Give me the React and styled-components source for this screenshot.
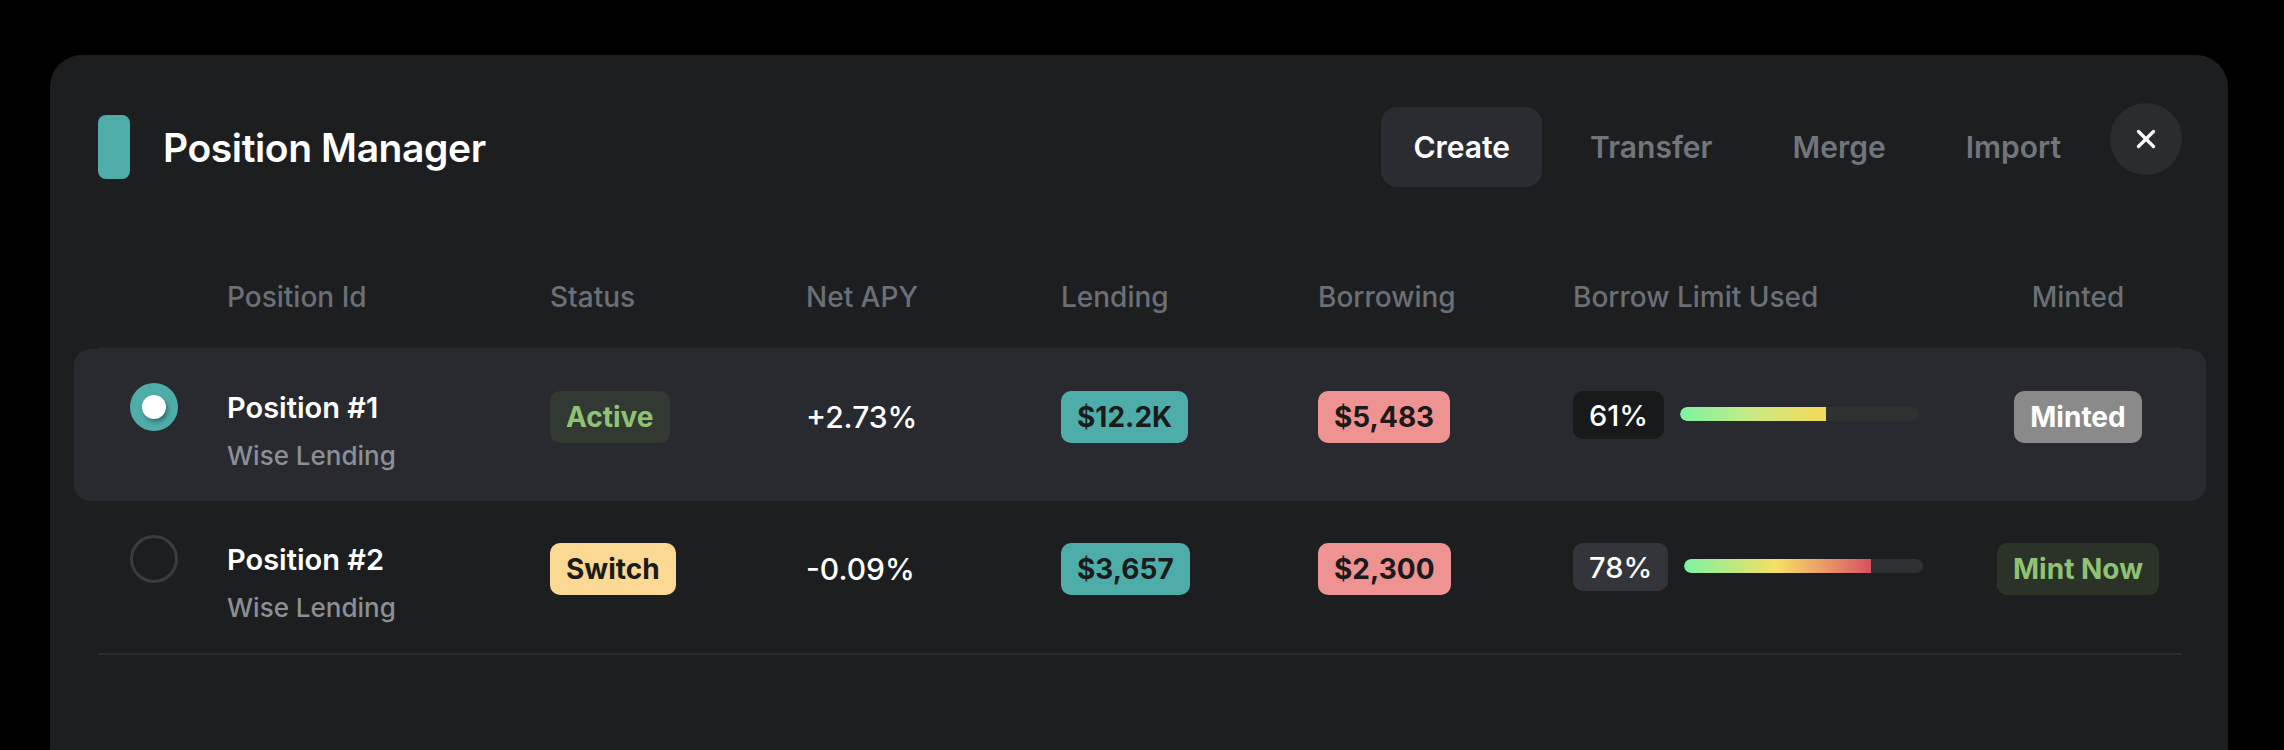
import React, { useState } from 'react'
import styled, { createGlobalStyle } from 'styled-components'
import { X } from 'lucide-react'

const GlobalStyle = createGlobalStyle`
    body {
        margin: 0;
        background: #000000;
        font-family: Inter, "Noto Sans", sans-serif;
        -webkit-font-smoothing: antialiased;
    }
`

const Page = styled.div`
    padding: 55px 56px 0 50px;
`

const Card = styled.div`
    background: #1d1e20;
    border-radius: 32px;
    padding: 48px 46px 140px 48px;
`

const Header = styled.div`
    display: flex;
    align-items: center;
`

const TitleMark = styled.div`
    width: 32px;
    height: 64px;
    border-radius: 8px;
    background: #4fada9;
    margin-right: 33px;
`

const Title = styled.h1`
    margin: 0;
    flex: 1;
    color: #ffffff;
    font-size: 39px;
    font-weight: 600;
    letter-spacing: -0.4px;
`

const Tabs = styled.div`
    display: flex;
    gap: 16px;
    margin-right: 17px;
`

const Tab = styled.button`
    height: 80px;
    padding: 0 32px;
    border: none;
    border-radius: 16px;
    background: ${p => (p.$active ? '#2a2c31' : 'transparent')};
    color: ${p => (p.$active ? '#ffffff' : '#71757c')};
    font-family: inherit;
    font-size: 30px;
    font-weight: 600;
    cursor: pointer;
`

const Close = styled.button`
    width: 72px;
    height: 72px;
    margin-bottom: 16px;
    border: none;
    border-radius: 50%;
    background: #2a2c30;
    color: #ffffff;
    display: flex;
    align-items: center;
    justify-content: center;
    cursor: pointer;
`

const Grid = styled.div`
    display: grid;
    grid-template-columns: 129px 323px 256px 255px 257px 255px 401px 1fr;
`

const HeadRow = styled(Grid)`
    margin-top: 89px;
    padding-bottom: 33px;
    border-bottom: 2px solid #25272b;
`

const HeadCell = styled.div`
    color: #6b6f76;
    font-size: 28px;
    font-weight: 500;
    line-height: 34px;
    text-align: ${p => (p.$center ? 'center' : 'left')};
`

const Row = styled(Grid)`
    margin: 0 -24px;
    padding: 42px 24px 34px;
    height: 152px;
    box-sizing: border-box;
    align-items: start;
    border-radius: 16px;
    background: ${p => (p.$selected ? '#282a2f' : 'transparent')};
`

const Rows = styled.div`
    border-bottom: 2px solid #2a2c2f;
`

const Radio = styled.div`
    width: 48px;
    height: 48px;
    margin: -8px 0 0 32px;
    box-sizing: border-box;
    border-radius: 50%;
    display: flex;
    align-items: center;
    justify-content: center;
    background: ${p => (p.$checked ? '#4fada9' : 'transparent')};
    border: ${p => (p.$checked ? 'none' : '3px solid #3a3c41')};
    cursor: pointer;
`

const RadioDot = styled.div`
    width: 24px;
    height: 24px;
    border-radius: 50%;
    background: #ffffff;
    box-shadow: 2px 3px 4px rgba(0, 0, 0, 0.35);
`

const NameBlock = styled.div`
    display: flex;
    flex-direction: column;
    gap: 14px;
`

const Name = styled.div`
    color: #ffffff;
    font-size: 29px;
    font-weight: 600;
    line-height: 34px;
`

const Protocol = styled.div`
    color: #8b8f96;
    font-size: 26px;
    font-weight: 500;
    line-height: 34px;
`

const Cell = styled.div`
    height: 52px;
    display: flex;
    align-items: center;
    justify-content: ${p => (p.$center ? 'center' : 'flex-start')};
`

const Badge = styled.span`
    height: 52px;
    padding: 0 16px;
    border-radius: 10px;
    display: inline-flex;
    align-items: center;
    font-size: 28px;
    font-weight: 700;
    background: ${p => p.$bg};
    color: ${p => p.$fg};
`

const Apy = styled.span`
    color: #ffffff;
    font-size: 30px;
    font-weight: 500;
`

const LimitWrap = styled.div`
    height: 52px;
    display: flex;
    align-items: center;
    gap: 16px;
`

const Percent = styled.span`
    height: 48px;
    padding: 0 16px;
    margin-top: -4px;
    border-radius: 10px;
    display: inline-flex;
    align-items: center;
    background: ${p => p.$bg};
    color: #ffffff;
    font-size: 29px;
    font-weight: 500;
`

const Track = styled.div`
    width: 239px;
    height: 14px;
    margin-top: -6px;
    border-radius: 7px;
    background: #2f3032;
    overflow: hidden;
`

const Fill = styled.div`
    height: 100%;
    border-radius: 7px 0 0 7px;
    background: ${p => p.$gradient};
`

const positions = [
    {
        id: 1,
        status: 'Active',
        apy: '+2.73%',
        lending: '$12.2K',
        borrowing: '$5,483',
        limit: 61,
        percentBg: '#18191b',
        gradient: 'linear-gradient(90deg, #7df2a3 0%, #c9ea84 50%, #f6d957 100%)',
        minted: true,
    },
    {
        id: 2,
        status: 'Switch',
        apy: '-0.09%',
        lending: '$3,657',
        borrowing: '$2,300',
        limit: 78,
        percentBg: '#33353b',
        gradient: 'linear-gradient(90deg, #7df2a3 0%, #f6df62 50%, #eb9a6a 75%, #d9505f 100%)',
        minted: false,
    },
]

const statusColors = {
    Active: { bg: '#323832', fg: '#8fc274' },
    Switch: { bg: '#fcd992', fg: '#1b1b1b' },
}

export default function App() {
    const [tab, setTab] = useState('Create')
    const [selected, setSelected] = useState(1)

    return (
        <Page>
            <GlobalStyle />
            <Card>
                <Header>
                    <TitleMark />
                    <Title>Position Manager</Title>
                    <Tabs>
                        {['Create', 'Transfer', 'Merge', 'Import'].map(t => (
                            <Tab key={t} $active={tab === t} onClick={() => setTab(t)}>
                                {t}
                            </Tab>
                        ))}
                    </Tabs>
                    <Close>
                        <X size={30} strokeWidth={2.6} />
                    </Close>
                </Header>

                <HeadRow>
                    <HeadCell />
                    <HeadCell>Position Id</HeadCell>
                    <HeadCell>Status</HeadCell>
                    <HeadCell>Net APY</HeadCell>
                    <HeadCell>Lending</HeadCell>
                    <HeadCell>Borrowing</HeadCell>
                    <HeadCell>Borrow Limit Used</HeadCell>
                    <HeadCell $center>Minted</HeadCell>
                </HeadRow>

                <Rows>
                    {positions.map(p => (
                        <Row key={p.id} $selected={selected === p.id}>
                            <Radio $checked={selected === p.id} onClick={() => setSelected(p.id)}>
                                {selected === p.id && <RadioDot />}
                            </Radio>
                            <NameBlock>
                                <Name>Position #{p.id}</Name>
                                <Protocol>Wise Lending</Protocol>
                            </NameBlock>
                            <Cell>
                                <Badge $bg={statusColors[p.status].bg} $fg={statusColors[p.status].fg}>
                                    {p.status}
                                </Badge>
                            </Cell>
                            <Cell>
                                <Apy>{p.apy}</Apy>
                            </Cell>
                            <Cell>
                                <Badge $bg="#4fada9" $fg="#1a1c1c">{p.lending}</Badge>
                            </Cell>
                            <Cell>
                                <Badge $bg="#ee9292" $fg="#1c1a1a">{p.borrowing}</Badge>
                            </Cell>
                            <LimitWrap>
                                <Percent $bg={p.percentBg}>{p.limit}%</Percent>
                                <Track>
                                    <Fill $gradient={p.gradient} style={{ width: `${p.limit}%` }} />
                                </Track>
                            </LimitWrap>
                            <Cell $center>
                                {p.minted ? (
                                    <Badge $bg="#8a8a8a" $fg="#ffffff">Minted</Badge>
                                ) : (
                                    <Badge $bg="#2b3329" $fg="#8fc274">Mint Now</Badge>
                                )}
                            </Cell>
                        </Row>
                    ))}
                </Rows>
            </Card>
        </Page>
    )
}
